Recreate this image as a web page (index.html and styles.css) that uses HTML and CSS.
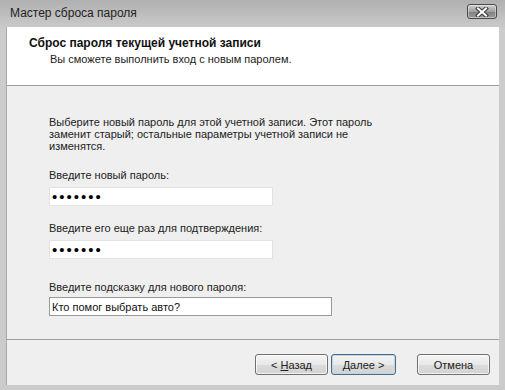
FILE: index.html
```html
<!DOCTYPE html>
<html>

<head>
  <meta charset="utf-8">
  <link rel="stylesheet" href="styles.css">
</head>

<body>
  <div class="window">
    <div class="titlebar">
      <span class="title">Мастер сброса пароля</span>
      <button class="close-btn">
        <svg width="14" height="10" viewBox="0 0 14 10">
          <path d="M3 1.5 L11 8.5 M11 1.5 L3 8.5" stroke="#3a3a3a" stroke-width="4" stroke-linecap="square" fill="none" />
          <path d="M3 1.5 L11 8.5 M11 1.5 L3 8.5" stroke="#fff" stroke-width="2" stroke-linecap="square" fill="none" />
        </svg>
      </button>
    </div>

    <div class="client">
      <div class="wizard-header">
        <div class="wizard-title">Сброс пароля текущей учетной записи</div>
        <div class="wizard-subtitle">Вы сможете выполнить вход с новым паролем.</div>
      </div>

      <div class="wizard-body">
        <p class="intro">Выберите новый пароль для этой учетной записи. Этот пароль<br>
          заменит старый; остальные параметры учетной записи не<br>
          изменятся.</p>

        <label class="field-label">Введите новый пароль:</label>
        <input class="field field-pass" type="password" value="1234567" readonly>

        <label class="field-label label-confirm">Введите его еще раз для подтверждения:</label>
        <input class="field field-pass" type="password" value="1234567" readonly>

        <label class="field-label label-hint">Введите подсказку для нового пароля:</label>
        <input class="field field-hint" type="text" value="Кто помог выбрать авто?" readonly>
      </div>

      <div class="wizard-footer">
        <button class="btn">&lt; <u>Н</u>азад</button>
        <button class="btn btn-default"><u>Д</u>алее &gt;</button>
        <button class="btn btn-cancel">Отмена</button>
      </div>
    </div>
  </div>
</body>

</html>
```

FILE: styles.css
```css
* {
  box-sizing: border-box;
}

body {
  margin: 0;
  padding: 0;
  font-family: "Liberation Sans", Arial, sans-serif;
  font-size: 11px;
  color: #1a1a1a;
  background: #c4c4c4;
}

.window {
  width: 505px;
  height: 390px;
  display: flex;
  flex-direction: column;
  background: linear-gradient(to bottom, #b0b0b0 0px, #cccccc 30px, #cbcbcb 100%);
}

.titlebar {
  height: 27px;
  display: flex;
  align-items: center;
  justify-content: space-between;
  padding: 0 8px 1px 10px;
}

.title {
  font-size: 12px;
  color: #222;
}

.close-btn {
  width: 30px;
  height: 15px;
  margin-top: -3px;
  padding: 0;
  border: 1px solid #4a4a4a;
  border-radius: 3px;
  background: linear-gradient(to bottom, #cfcfcf 0%, #a0a0a0 50%, #808080 51%, #9a9a9a 100%);
  display: flex;
  align-items: center;
  justify-content: center;
  box-shadow: inset 0 0 0 1px rgba(255, 255, 255, 0.4);
}

.client {
  flex: 1;
  margin: 0 6px 5px 6px;
  display: flex;
  flex-direction: column;
  border-left: 1px solid #a8a8a8;
}

.wizard-header {
  height: 59px;
  background: white;
  border-bottom: 1px solid #9d9d9d;
  padding: 9px 0 0 22px;
}

.wizard-title {
  font-weight: bold;
  font-size: 12px;
  color: #111;
}

.wizard-subtitle {
  margin-top: 3px;
  padding-left: 21px;
  color: #222;
}

.wizard-body {
  flex: 1;
  background: #efefef;
  border-bottom: 1px solid #9d9d9d;
  padding: 30px 0 0 42px;
  display: flex;
  flex-direction: column;
  align-items: flex-start;
}

.intro {
  margin: 0;
  white-space: nowrap;
  line-height: 12px;
  color: #222;
}

.field-label {
  display: block;
  line-height: 12px;
  margin-top: 17px;
  color: #222;
}

.label-confirm {
  margin-top: 16px;
}

.label-hint {
  margin-top: 22px;
}

.field {
  margin-top: 6px;
  height: 19px;
  border: 1px solid #e2e2e2;
  background: white;
  font-family: "Liberation Sans", Arial, sans-serif;
  font-size: 11px;
  color: #111;
  padding: 0 2px;
  outline: none;
}

.field-pass {
  width: 224px;
  letter-spacing: 2px;
  font-size: 15px;
  color: #000;
}

.field-hint {
  width: 283px;
  border: 1px solid #9a9a9a;
  margin-top: 4px;
}

.wizard-footer {
  height: 45px;
  background: #efefef;
  display: flex;
  align-items: flex-start;
  justify-content: flex-end;
  padding: 14px 9px 0 0;
  gap: 3px;
}

.btn {
  width: 73px;
  height: 21px;
  padding: 0;
  border: 1px solid #707070;
  border-radius: 3px;
  background: linear-gradient(to bottom, #f4f4f4 0%, #e8e8e8 50%, #dcdcdc 51%, #d2d2d2 100%);
  box-shadow: inset 0 0 0 1px rgba(255, 255, 255, 0.7);
  font-family: "Liberation Sans", Arial, sans-serif;
  font-size: 11px;
  color: #222;
}

.btn-default {
  width: 65px;
  border-color: #4f6a80;
  box-shadow: inset 0 0 0 1px #b8d8ec;
}

.btn-cancel {
  margin-left: 18px;
}
```
